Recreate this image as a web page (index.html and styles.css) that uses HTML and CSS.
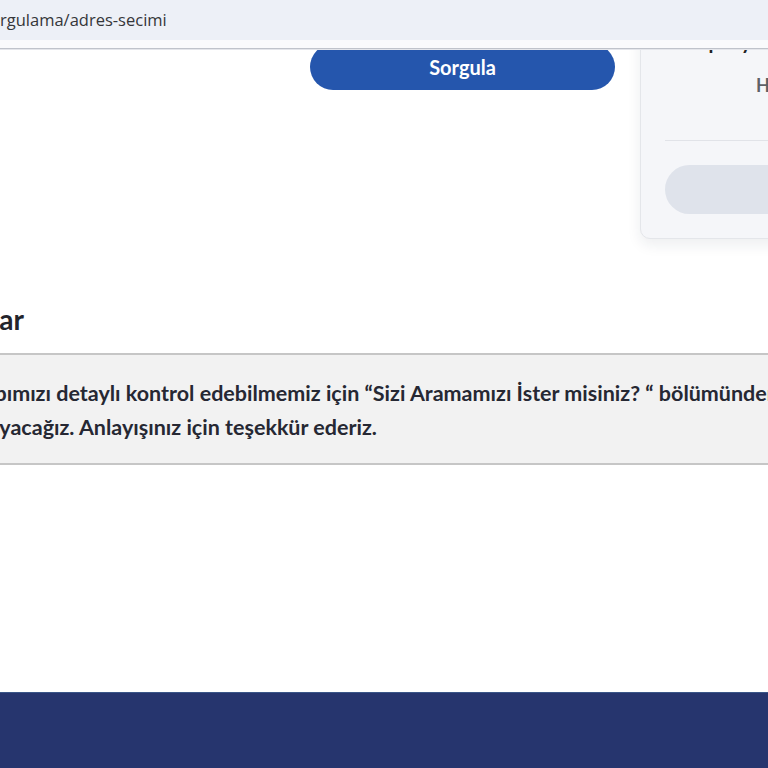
FILE: index.html
```html
<!DOCTYPE html>
<html lang="tr">
  <head>
    <meta charset="UTF-8" />
    <meta name="viewport" content="width=device-width, initial-scale=1.0" />
    <title>Altyapı Sorgulama - Adres Seçimi</title>
    <link rel="stylesheet" href="styles.css">
  </head>
  <body>
    <div class="chrome">
      <div class="url">rgulama/adres-secimi</div>
    </div>

    <div class="viewport">
      <div class="page">
        <div class="top-row">
          <div class="form-col">
            <button type="button" class="btn-query">Sorgula</button>
          </div>
          <aside class="summary">
            <div class="summary-title">Kampanya Detayı</div>
            <div class="summary-label">Hız Seçimi</div>
            <div class="summary-divider"></div>
            <div class="summary-btn"></div>
          </aside>
        </div>

        <section class="notes">
          <h2>Önemli Uyarılar</h2>
          <div class="note-box">
            <p>Adresinizdeki altyapımızı detaylı kontrol edebilmemiz için “Sizi Aramamızı İster misiniz? “ bölümünden numaranızı<br>paylaşın, sizi biz arayacağız. Anlayışınız için teşekkür ederiz.</p>
          </div>
        </section>
      </div>

      <footer class="footer"></footer>
    </div>
  </body>
</html>
```

FILE: styles.css
```css
html, body {
  margin: 0;
  padding: 0;
  background: #fff;
  overflow: hidden;
}
body {
  font-family: Lato, "Noto Sans", sans-serif;
  color: #22232b;
}

/* browser bar */
.chrome {
  height: 40px;
  background: #edf0f7;
  border-bottom: 8px solid #f9fafc;
  box-shadow: 0 1px 0 #bfc3cb, 0 2px 0 #e4e6eb;
}
.url {
  font-family: "Open Sans", "Noto Sans", sans-serif;
  font-size: 16.5px;
  line-height: 39px;
  color: #35363a;
}

.viewport {
  height: 718px;
  margin-top: 2px;
  overflow: hidden;
}
.page {
  width: 1176px;
  margin-left: -206px;
}

.top-row {
  display: grid;
  grid-template-columns: 1fr 330px;
  gap: 25px;
  margin-top: -47px;
  align-items: start;
}
.form-col {
  display: flex;
  justify-content: flex-end;
  padding-top: 41px;
}
.btn-query {
  width: 305px;
  height: 46px;
  border: none;
  border-radius: 23px;
  background: #2556ad;
  color: #fff;
  font-family: Lato, sans-serif;
  font-size: 20px;
  font-weight: 700;
  cursor: pointer;
}

.summary {
  background: #f5f6f9;
  border: 1px solid #e4e6ea;
  border-radius: 10px;
  box-shadow: 0 6px 14px rgba(30, 40, 70, 0.08);
  padding: 25px 24px 24px;
}
.summary-title {
  font-size: 20px;
  font-weight: 700;
  line-height: 24px;
  padding-left: 3px;
  color: #222;
}
.summary-label {
  margin-top: 21px;
  padding-left: 91px;
  font-size: 18px;
  font-weight: 700;
  line-height: 22px;
  color: #5e6167;
}
.summary-divider {
  height: 1px;
  background: #e1e3e8;
  margin-top: 44px;
}
.summary-btn {
  margin-top: 24px;
  height: 49px;
  border-radius: 25px;
  background: #dfe3eb;
}

/* notes */
.notes {
  margin-top: 64px;
}
.notes h2 {
  margin: 0 0 18px 34px;
  font-size: 28px;
  line-height: 32px;
  font-weight: 700;
  color: #23242c;
}
.note-box {
  background: #f2f2f2;
  border-top: 2px solid #c6c6c6;
  border-bottom: 2px solid #c6c6c6;
  padding: 21px 20px 19px;
}
.note-box p {
  margin: 0;
  font-size: 21.5px;
  line-height: 34px;
  font-weight: 700;
  color: #262833;
}

.footer {
  margin-top: 227px;
  height: 200px;
  background: #26356e;
  border-top: 1px solid #3a5688;
}
```
